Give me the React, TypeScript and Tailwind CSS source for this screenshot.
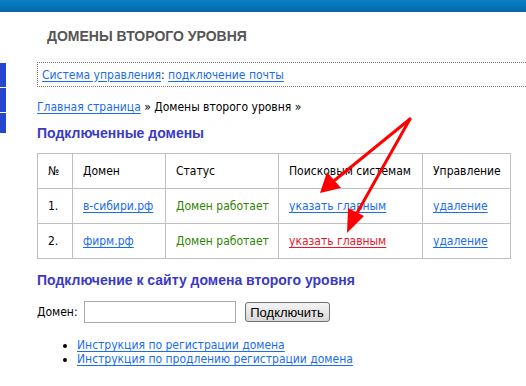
import React from "react";

const linkCls = "text-[#1a6cf0] underline underline-offset-2";
const cell = "border border-[#c0c0c0] pl-[10px] whitespace-nowrap";

export default function App() {
  const rows = [
    { n: "1.", domain: "в-сибири.рф", red: false },
    { n: "2.", domain: "фирм.рф", red: true },
  ];

  return (
    <div className="relative w-[526px] h-[386px] overflow-hidden bg-white font-['DejaVu_Sans_Condensed','DejaVu_Sans',sans-serif] text-[12px] text-black">
      {/* top bar */}
      <div className="h-[12px] bg-gradient-to-b from-[#0a80c6] to-[#0568a8]" />

      <div className="flex">
        {/* left menu stubs */}
        <div className="w-[6px] pt-[51px] flex flex-col gap-px">
          <div className="h-[24px] bg-[#2446d0]" />
          <div className="h-[24px] bg-[#2446d0]" />
          <div className="h-[20px] bg-[#2446d0]" />
        </div>

        <div className="flex-1 pl-[31px]">
          <h1 className="mt-[16px] pl-[10px] h-[16px] leading-[16px] font-['Liberation_Sans',sans-serif] font-bold text-[14px] text-[#555]">
            ДОМЕНЫ ВТОРОГО УРОВНЯ
          </h1>

          <div className="mt-[18px] h-[25px] border border-dotted border-[#777] border-r-0 pl-[4px] flex items-center">
            <a className={linkCls}>Система управления</a>
            <span>:&nbsp;</span>
            <a className={linkCls}>подключение почты</a>
          </div>

          <div className="mt-[13px] h-[14px] leading-[14px]">
            <a className={linkCls}>Главная страница</a> » Домены второго уровня »
          </div>

          <h2 className="mt-[11px] h-[17px] leading-[17px] font-['Liberation_Sans',sans-serif] font-bold text-[14px] text-[#3a3ac4]">
            Подключенные домены
          </h2>

          <table className="mt-[11px] table-fixed border-collapse border border-[#c0c0c0]">
            <tbody>
              <tr className="h-[35px]">
                <td className={`w-[35px] ${cell}`}>№</td>
                <td className={`w-[93px] ${cell}`}>Домен</td>
                <td className={`w-[113px] ${cell}`}>Статус</td>
                <td className={`w-[144px] ${cell}`}>Поисковым системам</td>
                <td className={`w-[88px] ${cell}`}>Управление</td>
              </tr>
              {rows.map((r) => (
                <tr key={r.n} className="h-[35px]">
                  <td className={cell}>{r.n}</td>
                  <td className={cell}>
                    <a className={linkCls}>{r.domain}</a>
                  </td>
                  <td className={`${cell} text-[#2e8600]`}>Домен работает</td>
                  <td className={cell}>
                    <a className={r.red ? "text-[#e8172a] underline underline-offset-2" : linkCls}>указать главным</a>
                  </td>
                  <td className={cell}>
                    <a className={linkCls}>удаление</a>
                  </td>
                </tr>
              ))}
            </tbody>
          </table>

          <h2 className="mt-[13px] h-[17px] leading-[17px] font-['Liberation_Sans',sans-serif] font-bold text-[14px] text-[#3a3ac4]">
            Подключение к сайту домена второго уровня
          </h2>

          <div className="mt-[12px] flex items-center">
            <span>Домен:</span>
            <input className="ml-[6px] w-[152px] h-[22px] border border-[#aaa] outline-none" />
            <button className="ml-[9px] w-[85px] h-[20px] rounded-[3px] border border-[#707070] bg-gradient-to-b from-[#f4f4f4] to-[#d8d8d8] font-['Liberation_Sans',sans-serif] text-[13px] leading-none">
              Подключить
            </button>
          </div>

          <ul className="mt-[15px] pl-[40px] list-disc leading-[14px]">
            <li><a className={linkCls}>Инструкция по регистрации домена</a></li>
            <li><a className={linkCls}>Инструкция по продлению регистрации домена</a></li>
          </ul>
        </div>
      </div>

      {/* annotation arrows */}
      <svg className="absolute inset-0 pointer-events-none" width="526" height="386">
        <line x1="410" y1="119" x2="335" y2="180" stroke="#f00" strokeWidth="3" strokeLinecap="round" />
        <polygon points="320,193 327,172 341,188" fill="#f00" />
        <line x1="410" y1="119" x2="357" y2="213" stroke="#f00" strokeWidth="3" strokeLinecap="round" />
        <polygon points="347,233 348,208 364,216" fill="#f00" />
      </svg>
    </div>
  );
}
